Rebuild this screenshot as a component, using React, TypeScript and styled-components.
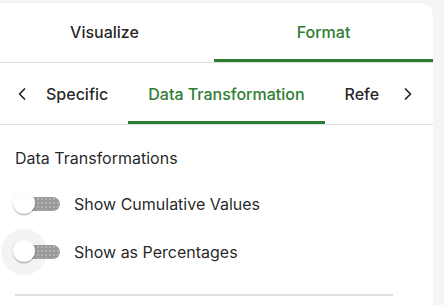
import { useState } from "react";
import styled, { createGlobalStyle } from "styled-components";
import { ChevronLeft, ChevronRight } from "lucide-react";

const GlobalStyle = createGlobalStyle`
  html, body {
    margin: 0;
    padding: 0;
    background: #f5f5f5;
    font-family: Inter, "Noto Sans", sans-serif;
    color: rgba(0, 0, 0, 0.87);
    overflow: hidden;
  }
  * {
    box-sizing: border-box;
  }
`;

const Page = styled.div`
  width: 444px;
  height: 305px;
  padding-top: 3px;
  overflow: hidden;
`;

const Panel = styled.div`
  width: 438px;
  height: 320px;
  margin-left: -5px;
  background: #ffffff;
  border-top-right-radius: 12px;
  box-shadow: 0 0 2px rgba(0, 0, 0, 0.04);
  display: flex;
  flex-direction: column;
`;

const MainTabs = styled.div`
  display: grid;
  grid-template-columns: 1fr 1fr;
  border-bottom: 1px solid #e0e0e0;
`;

const MainTab = styled.button<{ $active?: boolean }>`
  height: 59px;
  border: none;
  background: transparent;
  font-family: inherit;
  font-size: 16px;
  font-weight: 500;
  padding: 1px 0 0;
  color: ${(p) => (p.$active ? "#2e7d32" : "rgba(0, 0, 0, 0.87)")};
  border-bottom: 3px solid ${(p) => (p.$active ? "#2e7d32" : "transparent")};
  cursor: pointer;
`;

const SubTabBar = styled.div`
  display: flex;
  align-items: stretch;
  height: 62px;
  border-bottom: 1px solid #e0e0e0;
`;

const ScrollButton = styled.button<{ $width: number; $shift: number }>`
  flex: 0 0 ${(p) => p.$width}px;
  display: flex;
  align-items: center;
  justify-content: center;
  border: none;
  background: transparent;
  padding: 1px 0 0 ${(p) => p.$shift}px;
  color: rgba(0, 0, 0, 0.87);
  cursor: pointer;
`;

const Viewport = styled.div`
  flex: 1;
  overflow: hidden;
  display: flex;
`;

const Strip = styled.div`
  display: flex;
  margin-left: -12px;
  flex-shrink: 0;
`;

const SubTab = styled.button<{ $active?: boolean }>`
  flex-shrink: 0;
  border: none;
  background: transparent;
  padding: 3px 20px 0;
  font-family: inherit;
  font-size: 16px;
  font-weight: 500;
  white-space: nowrap;
  color: ${(p) => (p.$active ? "#2e7d32" : "rgba(0, 0, 0, 0.87)")};
  border-bottom: 3px solid ${(p) => (p.$active ? "#2e7d32" : "transparent")};
  cursor: pointer;
`;

const Content = styled.div`
  padding: 21px 40px 0 20px;
  display: flex;
  flex-direction: column;
`;

const Heading = styled.div`
  font-size: 16px;
  line-height: 24px;
  margin-bottom: 10px;
`;

const Row = styled.label`
  display: flex;
  align-items: center;
  height: 48px;
  cursor: pointer;
`;

const SwitchRoot = styled.span`
  position: relative;
  flex: 0 0 45px;
  height: 48px;
`;

const Halo = styled.span`
  position: absolute;
  left: -14px;
  top: 1px;
  width: 46px;
  height: 46px;
  border-radius: 50%;
  background: #f3f3f3;
`;

const Track = styled.span`
  position: absolute;
  left: 1px;
  top: 17px;
  width: 44px;
  height: 14px;
  border-radius: 7px;
  background-color: #9a9a9a;
  background-image: radial-gradient(
    rgba(255, 255, 255, 0.25) 0.7px,
    transparent 0.9px
  );
  background-size: 4px 4px;
`;

const Thumb = styled.span<{ $on: boolean }>`
  position: absolute;
  left: ${(p) => (p.$on ? "24px" : "-2px")};
  top: 12px;
  width: 22px;
  height: 22px;
  border-radius: 50%;
  background: ${(p) => (p.$on ? "#2e7d32" : "#ffffff")};
  box-shadow: 0 2px 1px -1px rgba(0, 0, 0, 0.2), 0 1px 1px rgba(0, 0, 0, 0.14),
    0 1px 3px rgba(0, 0, 0, 0.12);
  transition: left 0.15s;
`;

const Label = styled.span`
  margin-left: 14px;
  font-size: 16px;
  line-height: 24px;
`;

const Divider = styled.hr`
  border: none;
  border-top: 2px solid #e0e0e0;
  margin: 18px 0 0 0;
`;

const subTabs = ["Specific", "Data Transformation", "Reference Lines"];

type ToggleProps = {
  label: string;
  focused?: boolean;
};

const Toggle = ({ label, focused }: ToggleProps) => {
  const [on, setOn] = useState(false);
  return (
    <Row onClick={() => setOn(!on)}>
      <SwitchRoot>
        {focused && <Halo />}
        <Track />
        <Thumb $on={on} />
      </SwitchRoot>
      <Label>{label}</Label>
    </Row>
  );
};

export default function App() {
  const [tab, setTab] = useState("Format");
  const [sub, setSub] = useState("Data Transformation");

  return (
    <Page>
      <GlobalStyle />
      <Panel>
        <MainTabs>
          {["Visualize", "Format"].map((t) => (
            <MainTab key={t} $active={tab === t} onClick={() => setTab(t)}>
              {t}
            </MainTab>
          ))}
        </MainTabs>
        <SubTabBar>
          <ScrollButton $width={43} $shift={10}>
            <ChevronLeft size={20} strokeWidth={2} />
          </ScrollButton>
          <Viewport>
            <Strip>
              {subTabs.map((t) => (
                <SubTab key={t} $active={sub === t} onClick={() => setSub(t)}>
                  {t}
                </SubTab>
              ))}
            </Strip>
          </Viewport>
          <ScrollButton $width={54} $shift={4}>
            <ChevronRight size={20} strokeWidth={2} />
          </ScrollButton>
        </SubTabBar>
        <Content>
          <Heading>Data Transformations</Heading>
          <Toggle label="Show Cumulative Values" />
          <Toggle label="Show as Percentages" focused />
          <Divider />
        </Content>
      </Panel>
    </Page>
  );
}
